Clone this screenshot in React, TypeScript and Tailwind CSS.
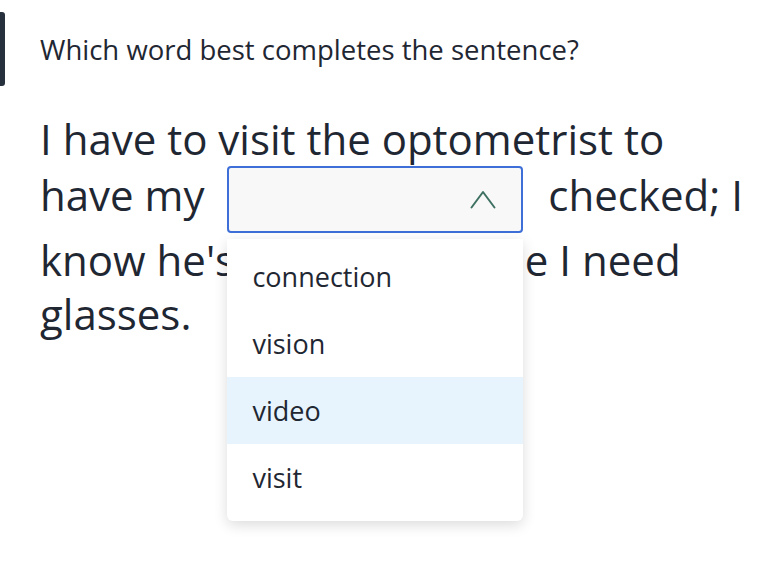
import { useState } from "react";

const options = ["connection", "vision", "video", "visit"];

export default function App() {
  const [hovered, setHovered] = useState("video");

  return (
    <div className="min-h-screen bg-white text-[#1f2733]" style={{ fontFamily: '"Open Sans", "Noto Sans", sans-serif' }}>
      <div className="flex pt-[12px]">
        <div className="w-[5px] h-[74px] rounded-r-[3px] bg-[#27303d]" />
        <h2 className="ml-[35px] mt-[20px] text-[27.5px] leading-[36px]">Which word best completes the sentence?</h2>
      </div>

      <p className="mt-[26px] ml-[40px] mr-[10px] text-[42px] leading-[54px]">
        I have to visit the optometrist to have my{" "}
        <span className="relative inline-block align-middle ml-[12px] mr-[14px] w-[296px]">
          <span className="flex items-center justify-end h-[67px] rounded-[4px] border-2 border-[#3e6fd8] bg-[#f8f8f8] pr-[25px]">
            <svg width="26" height="19" viewBox="0 0 26 19" fill="none" stroke="#3f7163" strokeWidth="2" strokeLinecap="round" strokeLinejoin="round">
              <path d="M1.5 17.5 L13 2 L24.5 17.5" />
            </svg>
          </span>
          <span className="absolute left-0 top-[73px] w-full flex flex-col pt-[4px] pb-[10px] rounded-b-[6px] bg-white shadow-[0_4px_14px_rgba(0,0,0,0.14)] z-10 overflow-hidden">
            {options.map((o) => (
              <span
                key={o}
                onMouseEnter={() => setHovered(o)}
                className={`flex items-center h-[67px] pl-[25px] text-[27px] leading-none ${hovered === o ? "bg-[#e8f4fd]" : "bg-white"}`}
              >
                {o}
              </span>
            ))}
          </span>
        </span>{" "}
        checked; I know he's going to tell me I need glasses.
      </p>
    </div>
  );
}
